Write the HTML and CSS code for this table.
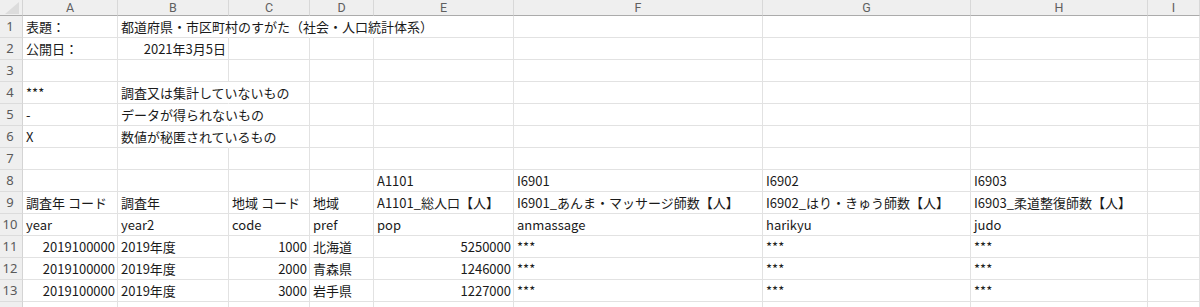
FILE: index.html
```html
<!DOCTYPE html>
<html lang="ja">
<head>
<meta charset="utf-8">
<title>Sheet</title>
<link rel="stylesheet" href="styles.css">
</head>
<body>
<div class="sheet">
  <div class="corner"><svg width="22" height="15" viewBox="0 0 22 15"><polygon points="5,14 19,2 19,14" fill="#dcdcdc"/></svg></div>
  <div class="ch">A</div><div class="ch">B</div><div class="ch">C</div><div class="ch">D</div><div class="ch">E</div><div class="ch">F</div><div class="ch">G</div><div class="ch">H</div><div class="ch">I</div>

  <div class="rh">1</div><div class="c">表題：</div><div class="c nr">都道府県・市区町村のすがた（社会・人口統計体系）</div><div class="c nr"></div><div class="c nr"></div><div class="c"></div><div class="c"></div><div class="c"></div><div class="c"></div><div class="c"></div>

  <div class="rh">2</div><div class="c">公開日：</div><div class="c r">2021年3月5日</div><div class="c"></div><div class="c"></div><div class="c"></div><div class="c"></div><div class="c"></div><div class="c"></div><div class="c"></div>

  <div class="rh">3</div><div class="c"></div><div class="c"></div><div class="c"></div><div class="c"></div><div class="c"></div><div class="c"></div><div class="c"></div><div class="c"></div><div class="c"></div>

  <div class="rh">4</div><div class="c">***</div><div class="c nr">調査又は集計していないもの</div><div class="c"></div><div class="c"></div><div class="c"></div><div class="c"></div><div class="c"></div><div class="c"></div><div class="c"></div>

  <div class="rh">5</div><div class="c">-</div><div class="c nr">データが得られないもの</div><div class="c"></div><div class="c"></div><div class="c"></div><div class="c"></div><div class="c"></div><div class="c"></div><div class="c"></div>

  <div class="rh">6</div><div class="c">X</div><div class="c nr">数値が秘匿されているもの</div><div class="c"></div><div class="c"></div><div class="c"></div><div class="c"></div><div class="c"></div><div class="c"></div><div class="c"></div>

  <div class="rh">7</div><div class="c"></div><div class="c"></div><div class="c"></div><div class="c"></div><div class="c"></div><div class="c"></div><div class="c"></div><div class="c"></div><div class="c"></div>

  <div class="rh">8</div><div class="c"></div><div class="c"></div><div class="c"></div><div class="c"></div><div class="c">A1101</div><div class="c">I6901</div><div class="c">I6902</div><div class="c">I6903</div><div class="c"></div>

  <div class="rh">9</div><div class="c">調査年 コード</div><div class="c">調査年</div><div class="c">地域 コード</div><div class="c">地域</div><div class="c">A1101_総人口【人】</div><div class="c">I6901_あんま・マッサージ師数【人】</div><div class="c">I6902_はり・きゅう師数【人】</div><div class="c">I6903_柔道整復師数【人】</div><div class="c"></div>

  <div class="rh">10</div><div class="c">year</div><div class="c">year2</div><div class="c">code</div><div class="c">pref</div><div class="c">pop</div><div class="c">anmassage</div><div class="c">harikyu</div><div class="c">judo</div><div class="c"></div>

  <div class="rh">11</div><div class="c r">2019100000</div><div class="c">2019年度</div><div class="c r">1000</div><div class="c">北海道</div><div class="c r">5250000</div><div class="c">***</div><div class="c">***</div><div class="c">***</div><div class="c"></div>

  <div class="rh">12</div><div class="c r">2019100000</div><div class="c">2019年度</div><div class="c r">2000</div><div class="c">青森県</div><div class="c r">1246000</div><div class="c">***</div><div class="c">***</div><div class="c">***</div><div class="c"></div>

  <div class="rh">13</div><div class="c r">2019100000</div><div class="c">2019年度</div><div class="c r">3000</div><div class="c">岩手県</div><div class="c r">1227000</div><div class="c">***</div><div class="c">***</div><div class="c">***</div><div class="c"></div>

  <div class="rh"></div><div class="c"></div><div class="c"></div><div class="c"></div><div class="c"></div><div class="c"></div><div class="c"></div><div class="c"></div><div class="c"></div><div class="c"></div>
</div>
</body>
</html>
```

FILE: styles.css
```css
html, body {
  margin: 0;
  padding: 0;
  background: #ffffff;
  overflow: hidden;
}

.sheet {
  display: grid;
  grid-template-columns: 23px 95px 111px 81px 64px 140px 249px 208px 177px 1fr;
  grid-template-rows: 16px;
  grid-auto-rows: 22px;
  width: 1200px;
  height: 307px;
  overflow: hidden;
  font-family: "Noto Sans CJK JP", "Noto Sans", sans-serif;
  font-size: 13px;
  color: #1a1a1a;
}

.corner {
  background: #efefef;
  border-right: 1px solid #d4d4d4;
  border-bottom: 1px solid #ababab;
  box-sizing: border-box;
  display: flex;
  align-items: flex-end;
  justify-content: flex-end;
  overflow: hidden;
}

.corner svg {
  display: block;
}

.ch {
  background: #efefef;
  border-right: 1px solid #d8d8d8;
  border-bottom: 1px solid #ababab;
  box-sizing: border-box;
  font-family: Roboto, "Liberation Sans", sans-serif;
  font-size: 12.5px;
  line-height: 15px;
  color: #5f5f5f;
  text-align: center;
}

.rh {
  background: #efefef;
  border-right: 1px solid #d4d4d4;
  border-bottom: 1px solid #dcdcdc;
  box-sizing: border-box;
  font-family: "Noto Sans", "Open Sans", sans-serif;
  font-size: 13px;
  line-height: 21px;
  color: #5a5a5a;
  text-align: center;
  padding-right: 2px;
}

.c {
  border-right: 1px solid #e2e2e2;
  border-bottom: 1px solid #e2e2e2;
  box-sizing: border-box;
  padding: 1px 3px 0 3px;
  line-height: 20px;
  white-space: nowrap;
  overflow: visible;
}

.c.r {
  text-align: right;
  padding-right: 2px;
}

.c.nr {
  border-right-color: transparent;
}
```
